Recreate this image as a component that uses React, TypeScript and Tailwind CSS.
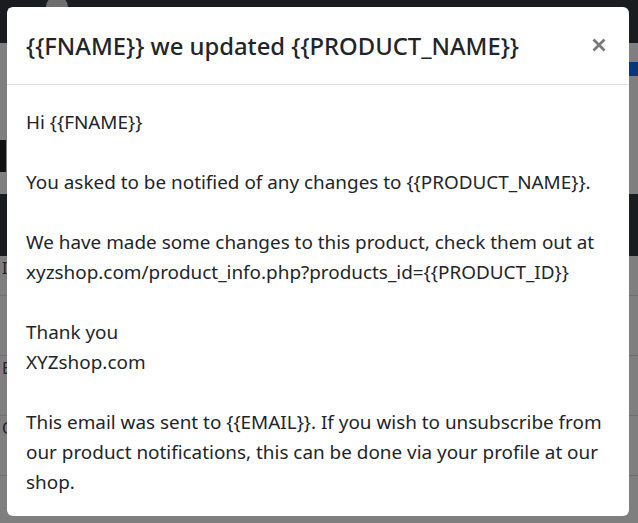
import React from "react";

export default function App() {
  const font = { fontFamily: '"Noto Sans", "Open Sans", Arial, sans-serif' };
  return (
    <div className="relative w-[638px] h-[523px] overflow-hidden bg-white" style={font}>
      {/* underlying page */}
      <div className="flex flex-col h-full">
        <div className="h-[43px] bg-[#343a40] flex items-center gap-6 px-2 shrink-0">
          <div className="flex flex-col gap-[3px] mt-[-16px]">
            <div className="w-[14px] h-[2px] bg-[#ccc]" />
            <div className="w-[14px] h-[2px] bg-[#ccc]" />
            <div className="w-[14px] h-[2px] bg-[#ccc]" />
          </div>
          <div className="w-[22px] h-[22px] rounded-full bg-[#ddd] mt-[-30px]" />
        </div>
        <div className="flex-1 flex flex-col">
          <div className="h-[19px] shrink-0" />
          <div className="flex justify-end shrink-0">
            <div className="w-[10px] h-[14px] bg-[#0d6efd]" />
          </div>
          <div className="h-[64px] shrink-0" />
          <div className="h-[32px] w-[6px] bg-[#222] shrink-0" />
          <div className="h-[22px] shrink-0" />
          <div className="h-[62px] bg-[#343a40] shrink-0" />
          <div className="h-[40px] border-b border-[#ddd] text-[#444] text-[16px] shrink-0 pl-[2px]">I</div>
          <div className="h-[60px] border-b border-[#ddd] shrink-0" />
          <div className="h-[60px] border-b border-[#ddd] text-[#444] shrink-0 pl-[2px]">E</div>
          <div className="h-[60px] border-b border-[#ddd] text-[#444] shrink-0 pl-[2px]">O</div>
        </div>
      </div>
      {/* backdrop */}
      <div className="absolute inset-0 bg-black/50" />
      {/* modal */}
      <div className="absolute left-[7px] top-[7px] w-[622px] h-[509px] bg-white rounded-[6px] flex flex-col text-[#212529]">
        <div className="flex items-center justify-between pl-[19px] pr-[23px] h-[78px] border-b border-[#dee2e6] shrink-0">
          <h5 className="text-[23.8px] font-medium leading-[36px]">{"{{FNAME}} we updated {{PRODUCT_NAME}}"}</h5>
          <svg width="14" height="14" viewBox="0 0 14 14" className="mt-[-2px]">
            <path d="M1.5 1.5 L12.5 12.5 M12.5 1.5 L1.5 12.5" stroke="#7a7a7a" strokeWidth="2.8" strokeLinecap="butt" />
          </svg>
        </div>
        <div className="px-[19px] pt-[22px] text-[18.9px] leading-[30px] flex flex-col gap-[30px]">
          <p>{"Hi {{FNAME}}"}</p>
          <p>{"You asked to be notified of any changes to {{PRODUCT_NAME}}."}</p>
          <p>
            We have made some changes to this product, check them out at
            <br />
            {"xyzshop.com/product_info.php?products_id={{PRODUCT_ID}}"}
          </p>
          <p>
            Thank you
            <br />
            XYZshop.com
          </p>
          <p>
            {"This email was sent to {{EMAIL}}. If you wish to unsubscribe from our product notifications, this can be done via your profile at our shop."}
          </p>
        </div>
      </div>
    </div>
  );
}
